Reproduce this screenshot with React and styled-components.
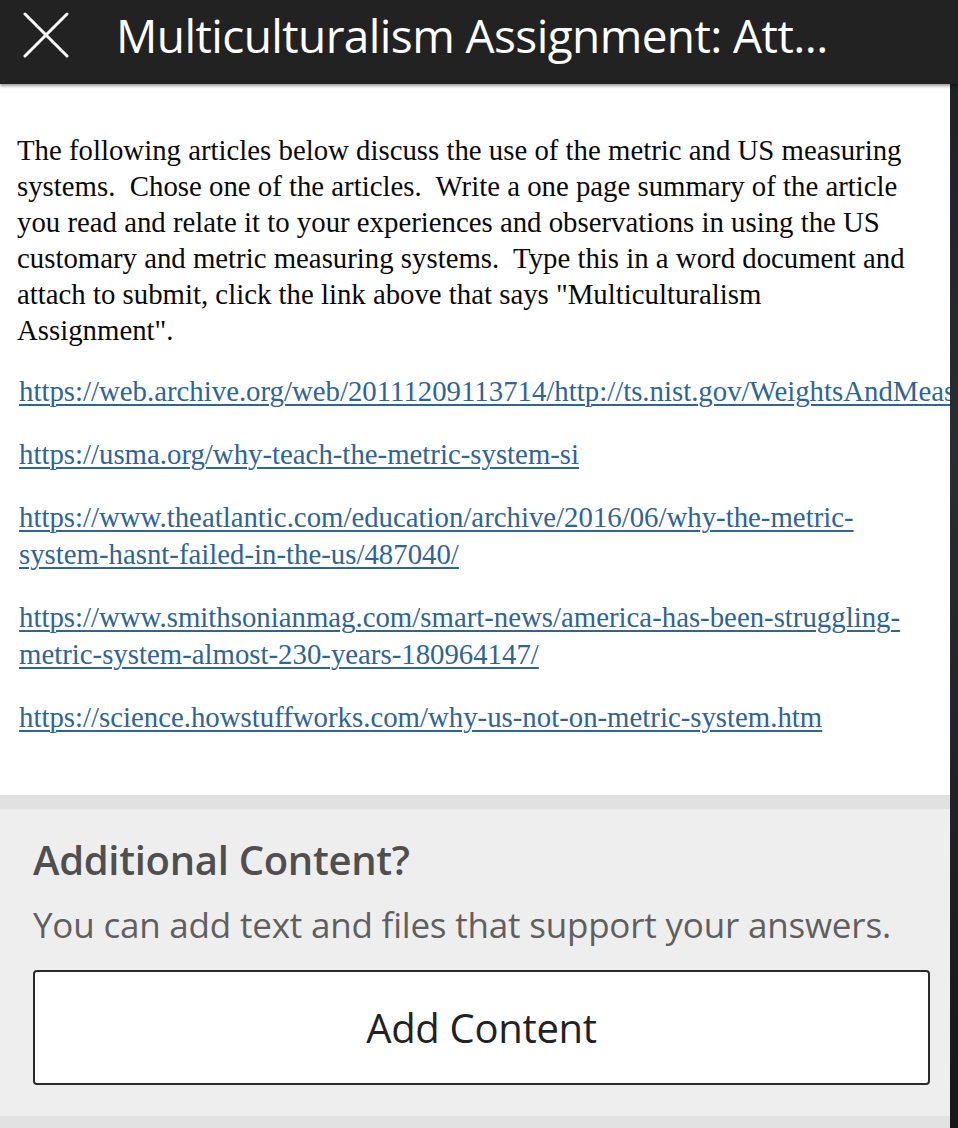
import React from "react";
import styled, { createGlobalStyle } from "styled-components";

const Global = createGlobalStyle`
  html, body { margin: 0; padding: 0; background: #1b1d20; }
  body { width: 958px; height: 1128px; overflow: hidden; }
  #root { width: 958px; height: 1128px; }
`;

const Screen = styled.div`
  width: 958px;
  height: 1128px;
  display: flex;
  flex-direction: column;
  background: linear-gradient(180deg, #1c1e22 0%, #2a2d33 40%, #15171a 100%);
`;

const Header = styled.header`
  height: 84px;
  flex: 0 0 84px;
  background: #222222;
  display: flex;
  align-items: center;
  gap: 46px;
  padding: 0 0 14px 22px;
  box-sizing: border-box;
  box-shadow: 0 2px 3px rgba(0,0,0,0.4);
  position: relative;
  z-index: 1;
`;

const CloseButton = styled.button`
  border: none;
  background: transparent;
  padding: 0;
  width: 48px;
  height: 46px;
  display: flex;
  align-items: center;
  justify-content: center;
  color: #fff;
  cursor: pointer;
`;

const Title = styled.h1`
  margin: 0;
  color: #ffffff;
  font-family: "Open Sans", sans-serif;
  font-weight: 400;
  font-size: 46px;
  letter-spacing: -0.6px;
  white-space: nowrap;
`;

const Panel = styled.main`
  width: 950px;
  flex: 1;
  display: flex;
  flex-direction: column;
  background: #ffffff;
  overflow: hidden;
`;

const Body = styled.section`
  padding: 48px 0 0 17px;
  height: 711px;
  box-sizing: border-box;
  font-family: "Liberation Serif", "Times New Roman", serif;
  color: #0a0a0a;
  background: #fff;
  overflow: hidden;
`;

const Paragraph = styled.p`
  margin: 0 0 25px 0;
  font-size: 28.8px;
  line-height: 36px;
  white-space: nowrap;
`;

const LinkPara = styled.p`
  margin: 0 0 26px 2px;
  font-size: 28.8px;
  line-height: 37px;
  white-space: nowrap;
`;

const Link = styled.a`
  color: #2f6496;
  text-decoration: underline;
  text-underline-offset: 3px;
  text-decoration-thickness: 1.5px;
`;

const Additional = styled.section`
  flex: 1;
  background: #eeeeee;
  border-top: 14px solid #e1e1e1;
  border-bottom: 12px solid #e2e2e2;
  padding: 26px 20px 0 33px;
  display: flex;
  flex-direction: column;
  font-family: "Open Sans", sans-serif;
`;

const AddTitle = styled.h2`
  margin: 0;
  font-size: 40px;
  font-weight: 600;
  color: #4f4f4f;
  line-height: 50px;
  letter-spacing: -0.3px;
`;

const AddText = styled.p`
  margin: 17px 0 0 0;
  font-size: 35px;
  font-weight: 400;
  color: #5f5f5f;
  line-height: 46px;
  letter-spacing: -0.2px;
  white-space: nowrap;
`;

const AddButton = styled.button`
  margin-top: 22px;
  width: 897px;
  height: 115px;
  background: #ffffff;
  border: 2px solid #2a2a2a;
  border-radius: 4px;
  font-family: "Open Sans", sans-serif;
  font-size: 40px;
  color: #222;
  letter-spacing: -0.3px;
  cursor: pointer;
`;

const links = [
  ["https://web.archive.org/web/20111209113714/http://ts.nist.gov/WeightsAndMeasures"],
  ["https://usma.org/why-teach-the-metric-system-si"],
  ["https://www.theatlantic.com/education/archive/2016/06/why-the-metric-", "system-hasnt-failed-in-the-us/487040/"],
  ["https://www.smithsonianmag.com/smart-news/america-has-been-struggling-", "metric-system-almost-230-years-180964147/"],
  ["https://science.howstuffworks.com/why-us-not-on-metric-system.htm"],
];

const paragraphLines = [
  "The following articles below discuss the use of the metric and US measuring",
  "systems.\u00a0 Chose one of the articles.\u00a0 Write a one page summary of the article",
  "you read and relate it to your experiences and observations in using the US",
  "customary and metric measuring systems.\u00a0 Type this in a word document and",
  "attach to submit, click the link above that says \"Multiculturalism",
  "Assignment\".",
];

export default function App() {
  return (
    <Screen>
      <Global />
      <Header>
        <CloseButton aria-label="Close">
          <svg width="46" height="46" viewBox="0 0 46 46" fill="none" stroke="#fff" strokeWidth="3" strokeLinecap="round">
            <path d="M2 2 L44 44 M44 2 L2 44" />
          </svg>
        </CloseButton>
        <Title>Multiculturalism Assignment: Att...</Title>
      </Header>
      <Panel>
        <Body>
          <Paragraph>
            {paragraphLines.map((line, i) => (
              <React.Fragment key={i}>
                {line}
                {i < paragraphLines.length - 1 && <br />}
              </React.Fragment>
            ))}
          </Paragraph>
          {links.map((parts) => (
            <LinkPara key={parts[0]}>
              <Link href="#">
                {parts.map((p, i) => (
                  <React.Fragment key={i}>
                    {p}
                    {i < parts.length - 1 && <br />}
                  </React.Fragment>
                ))}
              </Link>
            </LinkPara>
          ))}
        </Body>
        <Additional>
          <AddTitle>Additional Content?</AddTitle>
          <AddText>You can add text and files that support your answers.</AddText>
          <AddButton>Add Content</AddButton>
        </Additional>
      </Panel>
    </Screen>
  );
}
